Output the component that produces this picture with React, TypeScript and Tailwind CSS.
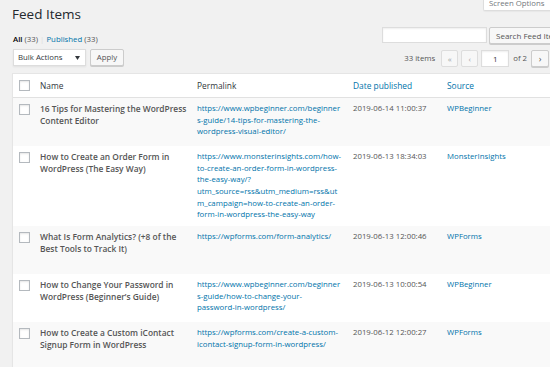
import React from 'react';

type FeedRow = {
    title: string[];
    link: string[];
    date: string;
    source: string;
};

const rows: FeedRow[] = [
    {
        title: ['16 Tips for Mastering the WordPress', 'Content Editor'],
        link: [
            'https://www.wpbeginner.com/beginner',
            's-guide/14-tips-for-mastering-the-',
            'wordpress-visual-editor/',
        ],
        date: '2019-06-14 11:00:37',
        source: 'WPBeginner',
    },
    {
        title: ['How to Create an Order Form in', 'WordPress (The Easy Way)'],
        link: [
            'https://www.monsterinsights.com/how-',
            'to-create-an-order-form-in-wordpress-',
            'the-easy-way/?',
            'utm_source=rss&utm_medium=rss&ut',
            'm_campaign=how-to-create-an-order-',
            'form-in-wordpress-the-easy-way',
        ],
        date: '2019-06-13 18:34:03',
        source: 'MonsterInsights',
    },
    {
        title: ['What Is Form Analytics? (+8 of the', 'Best Tools to Track It)'],
        link: ['https://wpforms.com/form-analytics/'],
        date: '2019-06-13 12:00:46',
        source: 'WPForms',
    },
    {
        title: ['How to Change Your Password in', 'WordPress (Beginner’s Guide)'],
        link: [
            'https://www.wpbeginner.com/beginner',
            's-guide/how-to-change-your-',
            'password-in-wordpress/',
        ],
        date: '2019-06-13 10:00:54',
        source: 'WPBeginner',
    },
    {
        title: ['How to Create a Custom iContact', 'Signup Form in WordPress'],
        link: [
            'https://wpforms.com/create-a-custom-',
            'icontact-signup-form-in-wordpress/',
        ],
        date: '2019-06-12 12:00:27',
        source: 'WPForms',
    },
];

const cols = 'grid grid-cols-[21px_157px_156px_94px_131px]';

const Checkbox: React.FC = () => (
    <div className="w-[11px] h-[11px] bg-white border border-[#b4b9be] shadow-[inset_0_1px_2px_rgba(0,0,0,0.1)]" />
);

const PageButton: React.FC<{ label: string; disabled?: boolean }> = ({ label, disabled }) => (
    <div
        className={
            disabled
                ? 'w-[17px] h-[17px] flex items-center justify-center border border-[#ddd] bg-[#f7f7f7] text-[#a0a5aa] text-[8px] rounded-[2px]'
                : 'w-[18px] h-[17px] flex items-center justify-center border border-[#ccc] bg-[#f7f7f7] text-[#555] text-[9px] rounded-[2px] shadow-[0_1px_0_#ccc]'
        }
    >
        {label}
    </div>
);

export default function App() {
    return (
        <div className="w-[550px] h-[367px] overflow-hidden bg-[#f1f1f1] font-['Open_Sans',sans-serif] text-[#444]">
            <div className="w-[573px] pl-[12px]">
                {/* Title + screen options */}
                <div className="flex items-start justify-between h-[27px]">
                    <h1 className="mt-[4px] text-[13.5px] leading-[20px] text-[#23282d]">Feed Items</h1>
                    <div className="w-[90px] h-[11px] bg-white border-x border-b border-[#ddd] rounded-b-[2px] shadow-[0_1px_1px_rgba(0,0,0,0.04)] pl-[5px] text-[7.8px] leading-[7px] text-[#72777c] whitespace-nowrap">
                        Screen Options
                    </div>
                </div>

                {/* Views + search */}
                <div className="flex items-start justify-between h-[22px]">
                    <div className="mt-[6px] ml-px text-[7.8px] leading-[12px] text-[#555]">
                        <span className="font-semibold text-black">All</span> (33) <span className="text-[#ddd]">|</span>{' '}
                        <span className="text-[#0073aa]">Published</span> (33)
                    </div>
                    <div className="flex gap-[2px] mr-[1px]">
                        <div className="w-[105px] h-[16px] bg-white border border-[#ddd] shadow-[inset_0_1px_2px_rgba(0,0,0,0.07)]" />
                        <div className="w-[83px] h-[17px] pl-[6px] flex items-center border border-[#ccc] bg-[#f7f7f7] rounded-[2px] shadow-[0_1px_0_#ccc] text-[8px] text-[#555] whitespace-nowrap">
                            Search Feed Items
                        </div>
                    </div>
                </div>

                {/* Bulk actions + pagination */}
                <div className="flex items-start justify-between h-[24px]">
                    <div className="flex gap-[4px] ml-px">
                        <div className="w-[73px] h-[17px] bg-white border border-[#ddd] flex items-center justify-between pl-[4px] pr-[5px] text-[7.8px] text-[#32373c] shadow-[0_1px_2px_rgba(0,0,0,0.07)]">
                            <span>Bulk Actions</span>
                            <svg width="5" height="4" viewBox="0 0 5 4">
                                <polygon points="0,0 5,0 2.5,4" fill="#32373c" />
                            </svg>
                        </div>
                        <div className="w-[34px] h-[17px] flex items-center justify-center border border-[#ccc] bg-[#f7f7f7] rounded-[2px] shadow-[0_1px_0_#ccc] text-[7.8px] text-[#555]">
                            Apply
                        </div>
                    </div>
                    <div className="flex items-center mt-[1px] mr-[3px] text-[7.8px] text-[#555]">
                        <span className="mr-[6px]">33 items</span>
                        <div className="flex gap-[3px] items-center">
                            <PageButton label="«" disabled />
                            <PageButton label="‹" disabled />
                            <div className="w-[28px] h-[17px] bg-white border border-[#ddd] flex items-center justify-center text-[8px] text-[#32373c] shadow-[inset_0_1px_2px_rgba(0,0,0,0.07)]">
                                1
                            </div>
                            <span className="mx-[1px]">of 2</span>
                            <PageButton label="›" />
                            <PageButton label="»" />
                        </div>
                    </div>
                </div>

                {/* List table */}
                <div className="w-[561px] bg-white border border-[#e5e5e5] shadow-[0_1px_1px_rgba(0,0,0,0.04)]">
                    <div className={`${cols} border-b border-[#e1e1e1] h-[24px] text-[8.4px] leading-[12px]`}>
                        <div className="pl-[6px] pt-[6px]">
                            <Checkbox />
                        </div>
                        <div className="pl-[6px] pt-[6px] text-[#32373c]">Name</div>
                        <div className="pl-[6px] pt-[6px] text-[#32373c]">Permalink</div>
                        <div className="pl-[6px] pt-[6px] text-[#0073aa]">Date published</div>
                        <div className="pl-[6px] pt-[6px] text-[#0073aa]">Source</div>
                    </div>

                    {rows.map((row, i) => (
                        <div key={i} className={`${cols} ${i % 2 === 0 ? 'bg-[#f9f9f9]' : 'bg-white'}`}>
                            <div className="pl-[6px] pt-[6px]">
                                <Checkbox />
                            </div>
                            <div className="pl-[6px] pt-[5px] pb-[5px]">
                                <div className="text-[8.4px] leading-[11.7px] font-semibold text-[#555] whitespace-nowrap">
                                    {row.title.map((line, j) => (
                                        <div key={j}>{line}</div>
                                    ))}
                                </div>
                                {/* hidden row actions keep their space */}
                                <div className="h-[14.5px]" />
                            </div>
                            <div className="pl-[6px] pt-[5px] pb-[5px] text-[7.8px] leading-[11.7px] text-[#0073aa] whitespace-nowrap">
                                {row.link.map((line, j) => (
                                    <div key={j}>{line}</div>
                                ))}
                            </div>
                            <div className="pl-[6px] pt-[5px] text-[7.8px] leading-[11.7px] text-[#555] whitespace-nowrap">
                                {row.date}
                            </div>
                            <div className="pl-[6px] pt-[5px] text-[7.8px] leading-[11.7px] text-[#0073aa]">
                                {row.source}
                            </div>
                        </div>
                    ))}
                </div>
            </div>
        </div>
    );
}
